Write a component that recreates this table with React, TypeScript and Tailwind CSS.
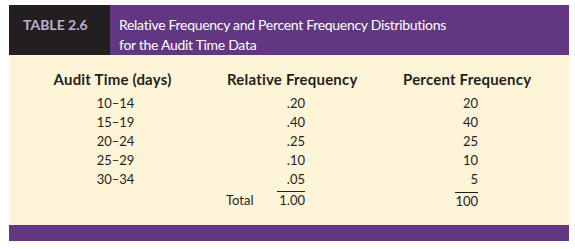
const rows = [
  { range: '10–14', rel: '.20', pct: '20' },
  { range: '15–19', rel: '.40', pct: '40' },
  { range: '20–24', rel: '.25', pct: '25' },
  { range: '25–29', rel: '.10', pct: '10' },
  { range: '30–34', rel: '.05', pct: '5' },
];

export default function App() {
  return (
    <div className="w-[575px] h-[249px] bg-white pt-[5px] pl-[9px] font-['Lato',sans-serif] text-[#231f20]">
      <div className="w-[560px]">
        <div className="flex h-[50px]">
          <div className="w-[101px] bg-[#231f20] pl-[14px] pt-[10px] text-[14px] font-bold text-[#bcb2cc] leading-[20px]">
            TABLE 2.6
          </div>
          <div className="flex-1 bg-[#623681] pl-[9px] pt-[10px] text-[14px] tracking-[-0.3px] text-white leading-[20px]">
            Relative Frequency and Percent Frequency Distributions
            <br />
            for the Audit Time Data
          </div>
        </div>

        <div className="h-[170px] bg-[#fef4d8] pt-[14px] text-[13px]">
          <div className="flex h-[20px] items-center text-[15px] font-bold tracking-[0.2px]">
            <div className="w-[207px] text-center">Audit Time (days)</div>
            <div className="ml-[11px] w-[176px]">Relative Frequency</div>
            <div>Percent Frequency</div>
          </div>
          <div className="mt-[5px]">
            {rows.map((r) => (
              <div key={r.range} className="flex h-[19px] items-center">
                <div className="w-[209px] pl-[4px] text-center">{r.range}</div>
                <div className="w-[87px] text-right">{r.rel}</div>
                <div className="w-[173px] text-right">{r.pct}</div>
              </div>
            ))}
            <div className="mt-[2px] flex h-[19px] items-center">
              <div className="w-[217px]" />
              <div className="w-[79px] flex justify-between">
                <span>Total</span>
                <span className="border-t border-[#231f20] pl-[2px] leading-[16px]">1.00</span>
              </div>
              <div className="w-[173px] flex justify-end">
                <span className="border-t border-[#231f20] leading-[16px]">100</span>
              </div>
            </div>
          </div>
        </div>

        <div className="h-[16px] bg-[#623681]" />
      </div>
    </div>
  );
}
